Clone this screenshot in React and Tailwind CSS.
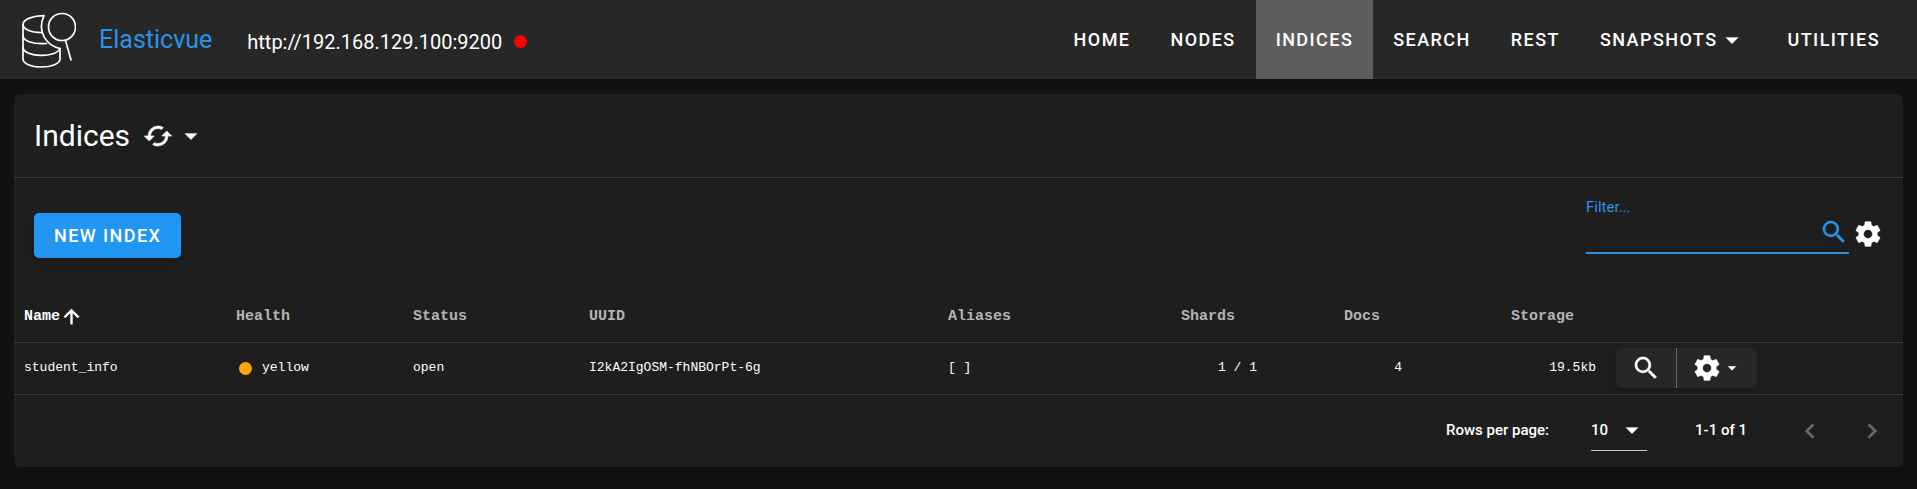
import React from "react";

const ICONS = {
  magnify:
    "M9.5,3A6.5,6.5 0 0,1 16,9.5C16,11.11 15.41,12.59 14.44,13.73L14.71,14H15.5L20.5,19L19,20.5L14,15.5V14.71L13.73,14.44C12.59,15.41 11.11,16 9.5,16A6.5,6.5 0 0,1 3,9.5A6.5,6.5 0 0,1 9.5,3M9.5,5C7,5 5,7 5,9.5C5,12 7,14 9.5,14C12,14 14,12 14,9.5C14,7 12,5 9.5,5Z",
  cog: "M12,15.5A3.5,3.5 0 0,1 8.5,12A3.5,3.5 0 0,1 12,8.5A3.5,3.5 0 0,1 15.5,12A3.5,3.5 0 0,1 12,15.5M19.43,12.97C19.47,12.65 19.5,12.33 19.5,12C19.5,11.67 19.47,11.34 19.43,11L21.54,9.37C21.73,9.22 21.78,8.95 21.66,8.73L19.66,5.27C19.54,5.05 19.27,4.96 19.05,5.05L16.56,6.05C16.04,5.66 15.5,5.32 14.87,5.07L14.5,2.42C14.46,2.18 14.25,2 14,2H10C9.75,2 9.54,2.18 9.5,2.42L9.13,5.07C8.5,5.32 7.96,5.66 7.44,6.05L4.95,5.05C4.73,4.96 4.46,5.05 4.34,5.27L2.34,8.73C2.21,8.95 2.27,9.22 2.46,9.37L4.57,11C4.53,11.34 4.5,11.67 4.5,12C4.5,12.33 4.53,12.65 4.57,12.97L2.46,14.63C2.27,14.78 2.21,15.05 2.34,15.27L4.34,18.73C4.46,18.95 4.73,19.03 4.95,18.95L7.44,17.94C7.96,18.34 8.5,18.68 9.13,18.93L9.5,21.58C9.54,21.82 9.75,22 10,22H14C14.25,22 14.46,21.82 14.5,21.58L14.87,18.93C15.5,18.67 16.04,18.34 16.56,17.94L19.05,18.95C19.27,19.03 19.54,18.95 19.66,18.73L21.66,15.27C21.78,15.05 21.73,14.78 21.54,14.63L19.43,12.97Z",
  menuDown: "M7,10L12,15L17,10H7Z",
  arrowUp:
    "M13,20H11V8L5.5,13.5L4.08,12.08L12,4.16L19.92,12.08L18.5,13.5L13,8V20Z",
  sync: "M19,8L15,12H18A6,6 0 0,1 12,18C11,18 10.03,17.75 9.2,17.3L7.74,18.76C8.97,19.54 10.43,20 12,20A8,8 0 0,0 20,12H23L19,8M6,12A6,6 0 0,1 12,6C13,6 13.97,6.25 14.8,6.7L16.26,5.24C15.03,4.46 13.57,4 12,4A8,8 0 0,0 4,12H1L5,16L9,12H6Z",
  chevronLeft:
    "M15.41,16.58L10.83,12L15.41,7.41L14,6L8,12L14,18L15.41,16.58Z",
  chevronRight: "M8.59,16.58L13.17,12L8.59,7.41L10,6L16,12L10,18L8.59,16.58Z",
};

function Icon({ name, className = "size-[30px]" }) {
  return (
    <svg
      viewBox="0 0 24 24"
      fill="currentColor"
      stroke="currentColor"
      strokeWidth={name === "sync" || name === "arrowUp" ? 0.5 : 0.2}
      aria-hidden="true"
      className={`shrink-0 ${className}`}
    >
      <path d={ICONS[name]} />
    </svg>
  );
}

function Logo() {
  return (
    <svg
      viewBox="0 0 56 56"
      fill="none"
      stroke="#fff"
      strokeWidth="1.7"
      strokeLinecap="round"
      strokeLinejoin="round"
      aria-hidden="true"
      className="size-14 shrink-0"
    >
      <path d="M24 3.600C13 3.500 3 7.500 3 12.500V47c0 4.500 8 8 18.500 8S40 51.500 40 47V36.500C28 34 16 21 24 3.600z" />
      <path d="M3 12.500c0 4.500 7.500 8 18.500 8" />
      <path d="M3 23.500c0 5.500 10 9 23.500 8" />
      <path d="M3 35.500c0 9 32 11.500 37 1" />
      <circle cx="42" cy="15" r="13.500" />
      <path d="M45.500 28.500l5.500 19.500" />
    </svg>
  );
}

const NAV = [
  { label: "Home" },
  { label: "Nodes" },
  { label: "Indices", active: true },
  { label: "Search" },
  { label: "Rest" },
  { label: "Snapshots", menu: true },
  { label: "Utilities" },
];

function Header() {
  return (
    <header className="flex h-[79px] items-center bg-[#272727] pr-[17px] pl-5">
      <Logo />
      <a href="#home" className="ml-[23px] text-[25px] text-[#2a93e6]">
        Elasticvue
      </a>
      <span className="ml-[35px] pt-1 text-xl">
        http://192.168.129.100:9200
      </span>
      <span className="mt-1 ml-3 size-[13px] rounded-full bg-[#f00]" />
      <nav className="ml-auto flex self-stretch text-lg font-medium tracking-[0.08em] uppercase">
        {NAV.map((item) =>
          item.menu ? (
            <button
              key={item.label}
              type="button"
              className="flex items-center px-5 tracking-[0.08em] uppercase"
            >
              {item.label}
              <Icon name="menuDown" />
            </button>
          ) : (
            <a
              key={item.label}
              href={`#${item.label.toLowerCase()}`}
              className={
                item.active
                  ? "flex items-center bg-[#5d5d5d] px-5"
                  : "flex items-center px-5"
              }
            >
              {item.label}
            </a>
          ),
        )}
      </nav>
    </header>
  );
}

const COLUMNS = [
  { label: "Name", width: "w-[212px]", sorted: true },
  { label: "Health", width: "w-[177px]" },
  { label: "Status", width: "w-[176px]" },
  { label: "UUID", width: "w-[359px]" },
  { label: "Aliases", width: "w-[152px]" },
  { label: "Shards", width: "w-[177px]", right: true },
  { label: "Docs", width: "w-[145px]", right: true },
  { label: "Storage", width: "w-[194px]", right: true },
];

function IndexTable() {
  return (
    <table className="w-full table-fixed border-collapse text-left font-['Liberation_Mono',monospace] text-[13px]">
      <thead className="text-[15px] text-[#b4b4b4]">
        <tr className="h-[50px] border-b border-[#3a3a3a]">
          {COLUMNS.map((c) => (
            <th
              key={c.label}
              scope="col"
              className={`${c.width} ${c.right ? "pr-8 text-right" : "pl-[10px]"}`}
            >
              {c.sorted ? (
                <button
                  type="button"
                  className="flex items-center font-bold text-white"
                >
                  {c.label}
                  <Icon name="arrowUp" className="size-[23px]" />
                </button>
              ) : (
                c.label
              )}
            </th>
          ))}
          <th scope="col" aria-label="Actions" />
        </tr>
      </thead>
      <tbody>
        <tr className="h-[52px] border-b border-[#3a3a3a]">
          <td className="pl-[10px]">student_info</td>
          <td className="pl-[10px]">
            <span className="flex items-center gap-[10px] pl-[3px]">
              <span className="size-[13px] rounded-full bg-[#ffa500]" />
              yellow
            </span>
          </td>
          <td className="pl-[10px]">open</td>
          <td className="pl-[10px]">I2kA2IgOSM-fhNBOrPt-6g</td>
          <td className="pl-[10px]">[ ]</td>
          <td className="pr-[10px] text-right">1 / 1</td>
          <td className="pr-[10px] text-right">4</td>
          <td className="pr-[10px] text-right">19.5kb</td>
          <td className="pl-[10px]">
            <div className="flex h-10 w-fit rounded-[5px] bg-[#272727] shadow-md">
              <button
                type="button"
                aria-label="Search index"
                className="flex w-[61px] items-center justify-center border-r border-[#6a6a6a]"
              >
                <Icon name="magnify" />
              </button>
              <button
                type="button"
                aria-label="Index options"
                className="flex w-20 items-center justify-center"
              >
                <Icon name="cog" />
                <Icon name="menuDown" className="size-5" />
              </button>
            </div>
          </td>
        </tr>
      </tbody>
    </table>
  );
}

function Pagination() {
  return (
    <div className="flex h-[72px] items-center justify-end pr-4 text-[15px] font-medium">
      <label htmlFor="rows">Rows per page:</label>
      <div className="mr-12 ml-[42px] flex h-10 w-14 items-center border-b border-[#c4c4c4]">
        <select
          id="rows"
          defaultValue="10"
          className="w-full appearance-none bg-transparent outline-none"
        >
          <option>10</option>
        </select>
        <Icon
          name="menuDown"
          className="pointer-events-none -ml-[30px] size-[30px]"
        />
      </div>
      <span>1-1 of 1</span>
      <button
        type="button"
        aria-label="Previous page"
        className="ml-12 text-[#6a6a6a]"
      >
        <Icon name="chevronLeft" />
      </button>
      <button
        type="button"
        aria-label="Next page"
        className="ml-8 text-[#6a6a6a]"
      >
        <Icon name="chevronRight" />
      </button>
    </div>
  );
}

export default function App() {
  return (
    <div className="min-h-screen bg-[#111] font-['Roboto',sans-serif] text-white">
      <Header />
      <main className="px-3.5 pt-[15px] pb-[23px]">
        <section className="rounded-[5px] bg-[#1e1e1e]">
          <div className="flex h-[84px] items-center border-b border-[#3a3a3a] px-5">
            <h1 className="text-[30px]">Indices</h1>
            <button
              type="button"
              aria-label="Reload indices"
              className="ml-[13px] flex items-center gap-[3px]"
            >
              <Icon name="sync" />
              <Icon name="menuDown" />
            </button>
          </div>
          <div className="flex items-start justify-between px-5 pt-[15px] pb-[34px]">
            <button
              type="button"
              className="mt-5 h-[45px] rounded-[5px] bg-[#2196f3] px-5 text-lg font-medium tracking-[0.08em] uppercase shadow-md"
            >
              New index
            </button>
            <div className="flex items-end">
              <div className="w-[263px] border-b-2 border-[#2a8fe0] pt-1 pb-[5px] text-[#2a93e6]">
                <label htmlFor="filter" className="block text-[15px] leading-5">
                  Filter...
                </label>
                <div className="flex h-[30px] items-center">
                  <input
                    id="filter"
                    type="text"
                    className="min-w-0 flex-1 bg-transparent text-white outline-none"
                  />
                  <Icon name="magnify" />
                </div>
              </div>
              <button
                type="button"
                aria-label="Table settings"
                className="ml-1 pb-[5px]"
              >
                <Icon name="cog" />
              </button>
            </div>
          </div>
          <IndexTable />
          <Pagination />
        </section>
      </main>
    </div>
  );
}
